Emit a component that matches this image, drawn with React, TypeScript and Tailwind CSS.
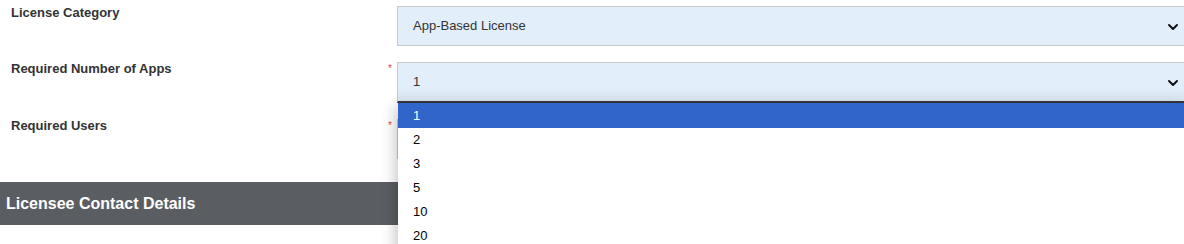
import { ChevronDown } from 'lucide-react';

const options = ['1', '2', '3', '5', '10', '20', '50'];

const Field = ({ label, value, required = false, focused = false }: { label: string; value: string; required?: boolean; focused?: boolean }) => (
  <div className="flex items-start">
    <div className="w-[386px] pl-[11px] text-[13px] font-bold leading-[13px] text-[#333]">{label}</div>
    <div className="w-[11px] pl-[2px] pt-[2px] text-[10px] leading-[10px] text-[#e5483e]">{required ? '*' : ''}</div>
    <div
      className={
        focused
          ? 'flex h-[41px] flex-1 items-center justify-between border border-b-2 border-[#c9c9c9] border-b-[#35383b] bg-gradient-to-b from-[#e3eefb] from-60% to-[#dbe5f2] pl-[15px] pr-[5px] mr-[-3px]'
          : 'flex h-[40px] flex-1 items-center justify-between border border-[#c9c9c9] bg-[#e3eefb] pl-[15px] pr-[5px] mr-[-3px]'
      }
    >
      <span className="text-[13px] text-[#333]">{value}</span>
      <ChevronDown size={16} strokeWidth={3} className="mt-[1px] text-[#111]" />
    </div>
  </div>
);

export default function App() {
  return (
    <div className="relative h-[244px] w-[1184px] overflow-hidden bg-white font-['Liberation_Sans',Arial,sans-serif]">
      <div className="flex flex-col gap-[16px] pt-[6px]">
        <Field label="License Category" value="App-Based License" />
        <Field label="Required Number of Apps" value="1" required focused />
        <Field label="Required Users" value="1" required />
      </div>

      <div className="mt-[23px] flex h-[43px] items-center bg-[#5a5e62] pl-[6px] text-[16px] font-bold text-white">
        Licensee Contact Details
      </div>

      {/* open dropdown list */}
      <div className="absolute left-[398px] top-[103px] right-0 h-[160px] rounded-tl-[3px] bg-white shadow-[-3px_3px_14px_rgba(0,0,0,0.22)]">
        {options.map((o, i) => (
          <div
            key={o}
            className={
              i === 0
                ? 'flex h-[25px] items-center bg-[#3165c9] pl-[15px] text-[13px] text-white'
                : 'flex h-[24px] items-center pl-[15px] text-[13px] text-black'
            }
          >
            {o}
          </div>
        ))}
      </div>
    </div>
  );
}
